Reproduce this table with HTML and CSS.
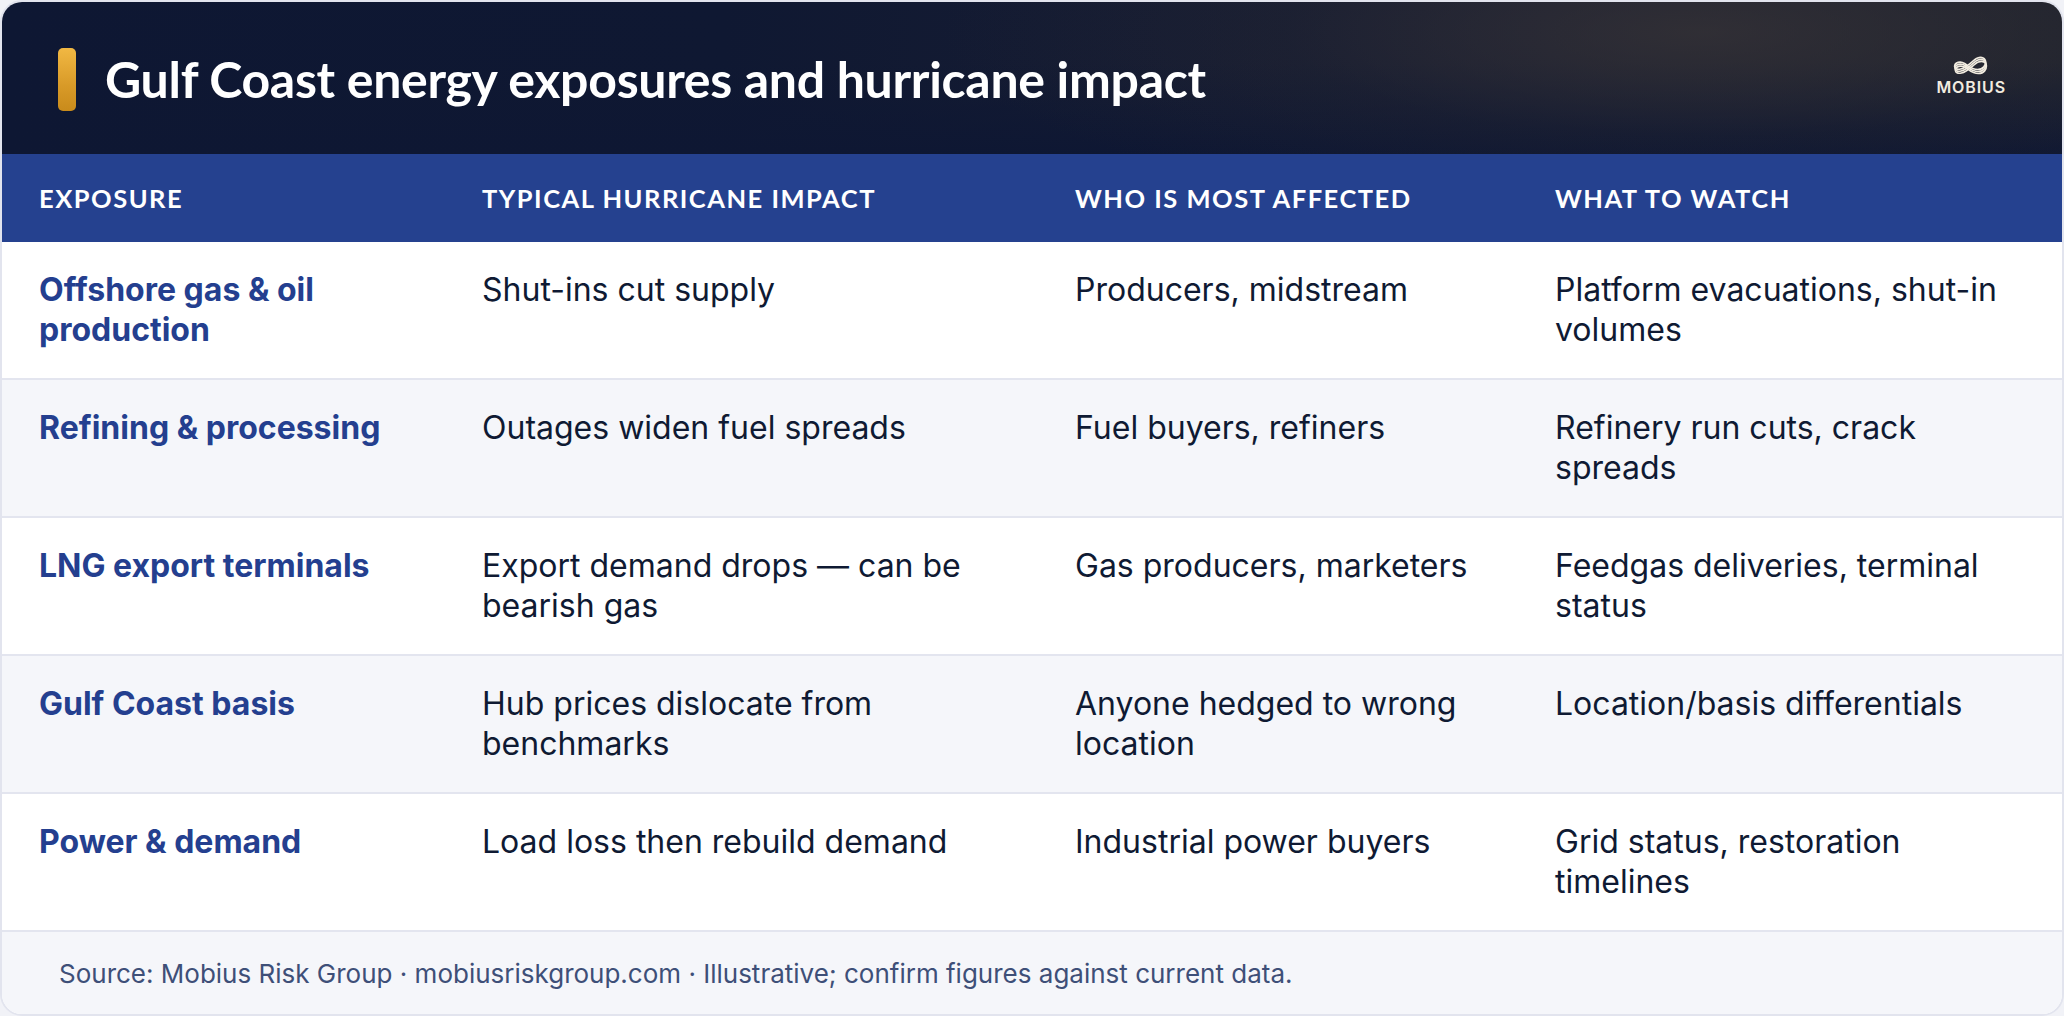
FILE: index.html
```html
<!DOCTYPE html>
<html lang="en">
<head>
<meta charset="utf-8">
<title>Gulf Coast energy exposures and hurricane impact</title>
<link rel="stylesheet" href="styles.css">
</head>
<body>
<div class="card">
  <header class="hero">
    <div class="hero-title">
      <span class="accent"></span>
      <h1>Gulf Coast energy exposures and hurricane impact</h1>
    </div>
    <div class="logo">
      <svg class="logo-mark" viewBox="0 0 40 21" width="40" height="21" aria-hidden="true">
        <defs>
          <path id="inf" d="M4 13.5 C4 9 10 8 14 10.5 C18 13 21 16.5 27 16.5 C33 16.5 35 12 35 9 C35 5 31 3.5 27 5 C22 7 17 14.5 10 16 C6 16.8 4 15.5 4 13.5 Z"/>
        </defs>
        <use href="#inf" class="band" transform="translate(-0.4,-2)"/>
        <use href="#inf" class="band"/>
        <use href="#inf" class="band" transform="translate(0.4,2)"/>
      </svg>
      <span class="logo-word">MOBIUS</span>
    </div>
  </header>

  <div class="table">
    <div class="th">Exposure</div>
    <div class="th">Typical hurricane impact</div>
    <div class="th">Who is most affected</div>
    <div class="th">What to watch</div>

    <div class="td label">Offshore gas &amp; oil production</div>
    <div class="td">Shut-ins cut supply</div>
    <div class="td">Producers, midstream</div>
    <div class="td">Platform evacuations, shut-in volumes</div>

    <div class="td label alt">Refining &amp; processing</div>
    <div class="td alt">Outages widen fuel spreads</div>
    <div class="td alt">Fuel buyers, refiners</div>
    <div class="td alt">Refinery run cuts, crack spreads</div>

    <div class="td label">LNG export terminals</div>
    <div class="td">Export demand drops — can be bearish gas</div>
    <div class="td">Gas producers, marketers</div>
    <div class="td">Feedgas deliveries, terminal status</div>

    <div class="td label alt">Gulf Coast basis</div>
    <div class="td alt">Hub prices dislocate from benchmarks</div>
    <div class="td alt">Anyone hedged to wrong location</div>
    <div class="td alt">Location/basis differentials</div>

    <div class="td label">Power &amp; demand</div>
    <div class="td">Load loss then rebuild demand</div>
    <div class="td">Industrial power buyers</div>
    <div class="td">Grid status, restoration timelines</div>
  </div>

  <footer class="foot">Source: Mobius Risk Group · mobiusriskgroup.com · Illustrative; confirm figures against current data.</footer>
</div>
</body>
</html>
```

FILE: styles.css
```css
* { box-sizing: border-box; }

html, body {
  margin: 0;
  padding: 0;
}

body {
  background: #f1f2f7;
  width: 2064px;
  height: 1016px;
  overflow: hidden;
  font-family: "Inter", "Liberation Sans", sans-serif;
}

.card {
  width: 2064px;
  height: 1016px;
  border: 2px solid #e2e4ee;
  border-radius: 22px;
  overflow: hidden;
  background: #ffffff;
  display: flex;
  flex-direction: column;
}

.hero {
  height: 152px;
  flex: none;
  display: flex;
  align-items: center;
  justify-content: space-between;
  padding: 0 56px 0 56px;
  background:
    radial-gradient(ellipse 760px 190px at 1700px 30px, rgba(56, 52, 54, 0.7), rgba(40, 40, 48, 0.25) 55%, rgba(14, 23, 51, 0) 100%),
    linear-gradient(180deg, rgba(14, 23, 51, 0) 40%, #0e1733 100%),
    linear-gradient(90deg, #0e1733 0%, #0f1832 35%, #1c2033 75%, #21242f 100%);
}

.hero-title {
  display: flex;
  align-items: center;
  gap: 29px;
  margin-top: 2px;
}

.accent {
  width: 18px;
  height: 63px;
  border-radius: 5px;
  background: linear-gradient(180deg, #f1b843 0%, #d89a28 60%, #c98b1b 100%);
  flex: none;
}

.hero h1 {
  margin: 0;
  font-family: "Lato", "Liberation Sans", sans-serif;
  font-weight: 700;
  font-size: 50px;
  line-height: 1;
  color: #ffffff;
  letter-spacing: -0.3px;
}

.logo {
  display: flex;
  flex-direction: column;
  align-items: center;
  gap: 3px;
  margin-top: -6px;
}

.logo-mark .band {
  fill: none;
  stroke: #f2ece0;
  stroke-width: 1.6;
  stroke-linejoin: round;
}

.logo-word {
  font-family: "Inter", "Liberation Sans", sans-serif;
  font-weight: 600;
  font-size: 16px;
  line-height: 1;
  letter-spacing: 0.9px;
  color: #f2ece0;
}

.table {
  display: grid;
  grid-template-columns: 443px 593px 480px 1fr;
  flex: none;
}

.th {
  height: 88px;
  display: flex;
  align-items: center;
  padding: 0 37px;
  background: #25418f;
  color: #ffffff;
  font-family: "Lato", "Liberation Sans", sans-serif;
  font-weight: 700;
  font-size: 25.5px;
  letter-spacing: 1.5px;
  text-transform: uppercase;
}

.td {
  height: 138px;
  padding: 28px 37px;
  border-bottom: 2px solid #e3e5ef;
  font-size: 32px;
  line-height: 40px;
  color: #0f1a33;
  background: #ffffff;
}

.td.alt {
  background: #f5f6fa;
}

.td.label {
  font-weight: 700;
  color: #243f8f;
}

.foot {
  flex: 1;
  display: flex;
  align-items: center;
  padding: 0 57px;
  background: #f5f6fa;
  color: #3e4f78;
  font-size: 26px;
}
```
